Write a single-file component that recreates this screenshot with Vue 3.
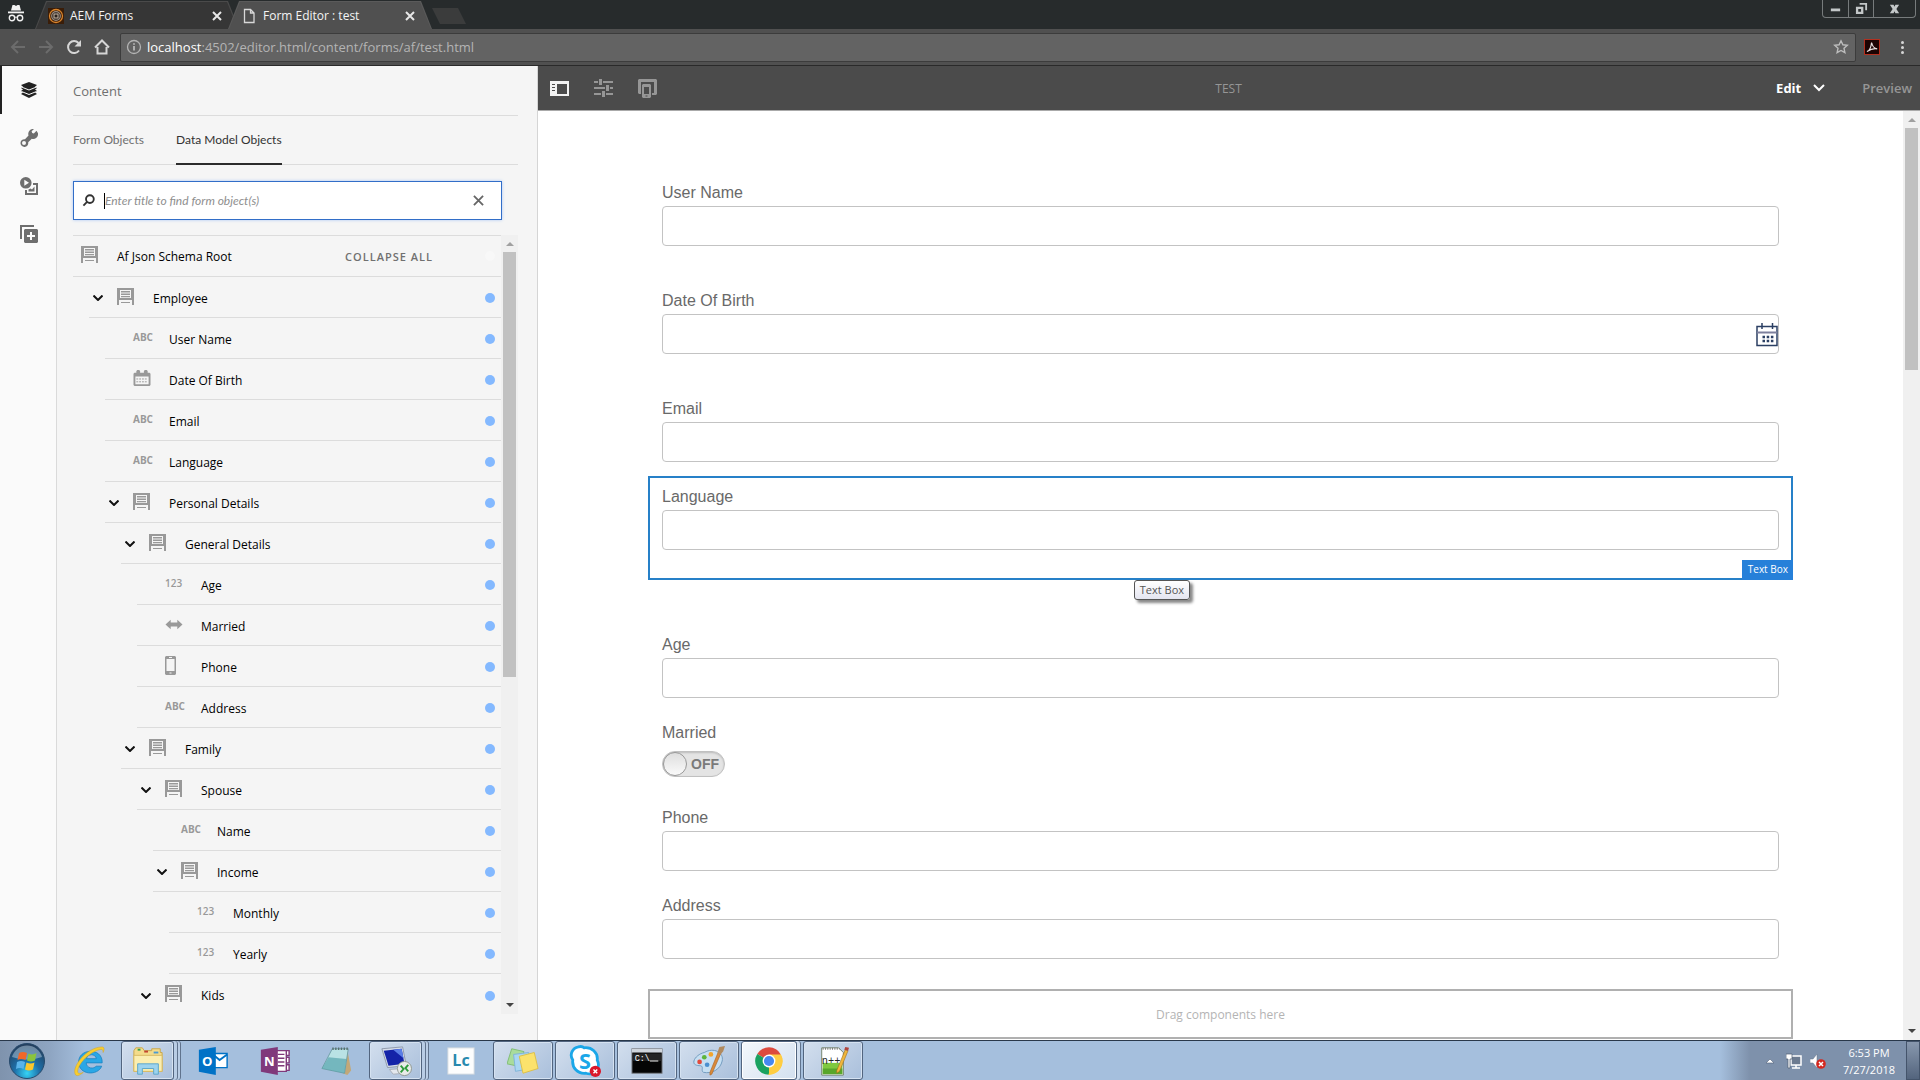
<template>
  <div class="screen">
    <!-- 浏览器标签栏 -->
    <header class="tabstrip">
      <svg class="incognito" viewBox="0 0 18 20" aria-hidden="true">
        <path d="M5.5 1h2l1.500 1h0l1.500-1h2l1.500 5.500H4z" fill="#f2f2f2" />
        <rect x="1" y="7.500" width="16" height="1.800" fill="#f2f2f2" />
        <circle cx="5" cy="14" r="2.700" fill="none" stroke="#f2f2f2" stroke-width="1.400" />
        <circle cx="13" cy="14" r="2.700" fill="none" stroke="#f2f2f2" stroke-width="1.400" />
        <path d="M7.500 13.500q1.500-1 3 0" fill="none" stroke="#f2f2f2" />
      </svg>
      <div class="tab-edge">
        <div class="tab">
          <svg class="tab-icon" viewBox="0 0 16 16" aria-hidden="true">
            <rect width="16" height="16" fill="#3a1d08" />
            <circle cx="8" cy="8" r="6.500" fill="none" stroke="#d9842c" stroke-width="1.300" />
            <circle cx="8" cy="8" r="4.300" fill="#2a211b" stroke="#9a8f86" stroke-width="1.200" />
            <rect x="6" y="6" width="4" height="4" fill="none" stroke="#c9b9a8" />
          </svg>
          <span class="tab-title">AEM Forms</span>
          <button class="tab-close" aria-label="Close tab"><svg viewBox="0 0 10 10"><path d="M1 1l8 8M9 1l-8 8" /></svg></button>
        </div>
      </div>
      <div class="tab-edge active">
        <div class="tab">
          <svg class="tab-icon" viewBox="0 0 16 16" aria-hidden="true">
            <path d="M3.500 1.500h6l3.500 3.500v9.500h-9.500zM9.500 1.500v3.500h3.500" fill="none" stroke="#d8d8d8" stroke-width="1.300" />
          </svg>
          <span class="tab-title">Form Editor : test</span>
          <button class="tab-close" aria-label="Close tab"><svg viewBox="0 0 10 10"><path d="M1 1l8 8M9 1l-8 8" /></svg></button>
        </div>
      </div>
      <button class="new-tab" aria-label="New tab"></button>
      <div class="window-controls">
        <button aria-label="Minimize">
          <svg viewBox="0 0 14 14"><rect x="2" y="7" width="10" height="3" /></svg>
        </button>
        <button aria-label="Restore">
          <svg viewBox="0 0 14 14"><path d="M5 1h8v8h-2v-6h-6zM1 5h8v8H1zM3.500 7.500v3h3v-3z" fill-rule="evenodd" /></svg>
        </button>
        <button class="wide" aria-label="Close">
          <svg viewBox="0 0 14 14"><path d="M2 3h4l1 2 1-2h4l-3 4.500 3 4.500h-4l-1-2-1 2H2l3-4.500z" /></svg>
        </button>
      </div>
    </header>

    <!-- 地址栏 -->
    <div class="toolbar">
      <button class="nav dim" aria-label="Back"><svg viewBox="0 0 16 16"><path d="M15 8H2M8 2L2 8l6 6" /></svg></button>
      <button class="nav dim" aria-label="Forward"><svg viewBox="0 0 16 16"><path d="M1 8h13M8 2l6 6-6 6" /></svg></button>
      <button class="nav" aria-label="Reload"><svg viewBox="0 0 16 16"><path d="M13 11.500A6 6 0 1 1 12.500 4" /><path class="solid" d="M15 1v6.500H8.500z" /></svg></button>
      <button class="nav" aria-label="Home"><svg viewBox="0 0 16 16"><path d="M1 8.500L8 1.500l7 7M3.500 8v6.500h9V8" /></svg></button>
      <div class="address">
        <svg class="info" viewBox="0 0 16 16" aria-hidden="true">
          <circle cx="8" cy="8" r="6.500" fill="none" stroke="#b4b4b4" stroke-width="1.300" />
          <path d="M8 7v4.500M8 4.200v1.600" stroke="#c4c4c4" stroke-width="1.600" />
        </svg>
        <span class="url"><b>localhost</b>:4502/editor.html/content/forms/af/test.html</span>
        <svg class="star" viewBox="0 0 16 16" aria-hidden="true">
          <path d="M8 1.800l1.900 4 4.400.500-3.300 3 .900 4.400L8 11.500l-3.900 2.200.900-4.400-3.300-3 4.400-.500z" fill="none" stroke="#bdbdbd" stroke-width="1.400" />
        </svg>
      </div>
      <svg class="acrobat" viewBox="0 0 16 16" aria-hidden="true">
        <rect x=".5" y=".5" width="15" height="15" fill="#1c0303" stroke="#b3301f" />
        <path d="M3 12.500c2-.500 4-4 4.600-9 .800 4 3 6 5.600 6.300-3.500-.600-6.500.200-10.200 2.700z" fill="none" stroke="#e8e0e0" stroke-width="1.200" />
      </svg>
      <button class="more" aria-label="Menu"><i></i><i></i><i></i></button>
    </div>

    <main class="editor">
      <!-- 左侧图标栏 -->
      <nav class="rail">
        <button class="current" aria-label="Content">
          <svg viewBox="0 0 18 18"><path d="M9 1l8 3-2 1.700 2 1.300-2 1.500 2 1.500-2 1.500 2 1.500-8 4-8-4 2-1.500L1 10l2-1.500L1 7l2-1.300L1 4z" /><path class="gap" d="M1.500 6L9 9 16.500 6M1.500 10.500L9 13.500 16.500 10.500" /></svg>
        </button>
        <button aria-label="Properties">
          <svg viewBox="0 0 18 18"><path d="M16.500 1.800L13.800 4.500l-1.600-.600-.600-1.600L14 0a5 5 0 0 0-5.500 6.500L5 10.200a3.900 3.900 0 1 0 3.200 3.100l3.600-3.500A5 5 0 0 0 18 4.200zM4 12a2 2 0 1 1 0 4 2 2 0 0 1 0-4z" fill-rule="evenodd" /></svg>
        </button>
        <button aria-label="Assets">
          <svg viewBox="0 0 18 18"><path d="M5.800 0a5.800 5.800 0 1 1 0 11.600A5.800 5.800 0 0 1 5.800 0zM4.300 2.800v6l4.700-3z" fill-rule="evenodd" /><path d="M13 6h5v12H5v-5h2v3h9V8h-3zM8.500 14.500v-2l2-1 1.500 1 2.500-3v5z" /></svg>
        </button>
        <button aria-label="Components">
          <svg viewBox="0 0 18 18"><path d="M0 0h14v2H2v12H0z" /><path d="M5 4h12l1 1v12l-1 1H5l-1-1V5zM10 7v3H7v2h3v3h2v-3h3v-2h-3V7z" fill-rule="evenodd" /></svg>
        </button>
      </nav>

      <!-- 侧面板 -->
      <aside class="panel">
        <h2 class="panel-title">Content</h2>
        <div class="panel-tabs">
          <button>Form Objects</button>
          <button class="on">Data Model Objects</button>
        </div>
        <div class="search">
          <svg class="search-icon" viewBox="0 0 14 14" aria-hidden="true"><circle cx="8.500" cy="5.500" r="4.200" /><path d="M5.500 8.500L1.500 12.500" /></svg>
          <span class="caret"></span>
          <input type="text" v-model="keyword" aria-label="Search form objects" placeholder="Enter title to find form object(s)">
          <button aria-label="Clear" @click="keyword = ''"><svg viewBox="0 0 12 12"><path d="M1 1l10 10M11 1L1 11" /></svg></button>
        </div>
        <div class="tree-wrap">
          <ul class="tree">
            <li v-for="(node, i) in nodes" :key="i" :class="{ root: node.level === 0 }" :style="{ marginLeft: node.level * 16 + 'px' }">
              <span v-if="node.level" class="twisty">
                <button v-if="node.type === 'group'" :aria-label="'Collapse ' + node.name"><svg viewBox="0 0 10 6"><path d="M0.500 0.500L5 5l4.500-4.500" /></svg></button>
              </span>
              <span class="type">
                <svg v-if="node.type === 'group'" class="ico" viewBox="0 0 17 17"><path d="M0 0h17v17h-2v-5H2v5H0zM3 2v8h11V2zM4 3h9v1.500H4zM4 5.500h9V7H4zM4 8h9v1.300H4zM4 14h9v1H4z" fill-rule="evenodd" /></svg>
                <svg v-else-if="node.type === 'date'" class="ico date" viewBox="0 0 18 18"><path d="M1 3h2V1l1-1h2l1 1v2h4V1l1-1h2l1 1v2h2l1 1v12l-1 1H1l-1-1V4zM2 7v8h14V7z" fill-rule="evenodd" /><path d="M3 9.500h12M3 12.500h12" stroke="#999" stroke-dasharray="2 1" /></svg>
                <svg v-else-if="node.type === 'switch'" class="ico date" viewBox="0 0 18 18"><path d="M0 9l5.500-5v3h7V4L18 9l-5.500 5v-3h-7v3z" /></svg>
                <svg v-else-if="node.type === 'phone'" class="ico phone" viewBox="0 0 11 19"><path d="M1 0h9l1 1v17l-1 1H1l-1-1V1zM1.500 3v12h8V3zM4.500 16.500v1h2v-1zM4 1v1h3V1z" fill-rule="evenodd" /></svg>
                <span v-else :class="node.type">{{ node.type === 'abc' ? 'ABC' : '123' }}</span>
              </span>
              <span class="name">{{ node.name }}</span>
              <button v-if="node.level === 0" class="collapse">COLLAPSE ALL</button>
              <i class="dot" :class="{ blank: node.level === 0 }"></i>
            </li>
          </ul>
          <div class="scroll">
            <i class="up"></i>
            <i class="thumb"></i>
            <i class="down"></i>
          </div>
        </div>
      </aside>

      <!-- 表单区域 -->
      <section class="stage">
        <div class="actionbar">
          <button aria-label="Toggle side panel">
            <svg class="bright" viewBox="0 0 19 19"><path d="M0 2h19v15H0zM7 5v10h10V5zM2 5v1h3V5zM2 8v1h3V8zM2 11v1h3v-1z" fill-rule="evenodd" /></svg>
          </button>
          <button aria-label="Page information">
            <svg viewBox="0 0 19 19"><path d="M0 2h4v2H0zM9 2h10v2H9zM5 0h3v6H5zM0 8h11v2H0zM16 8h3v2h-3zM12 6h3v6h-3zM0 14h7v2H0zM12 14h7v2h-7zM8 12h3v6H8z" /></svg>
          </button>
          <button aria-label="Emulator">
            <svg viewBox="0 0 19 19"><path d="M1 0h17l1 1v14l-1 1h-4v-2h2V3H3v12H1l-1-1V1z" /><path d="M5 5h7l1 1v12l-1 1H5l-1-1V6zM6 8v7h5V8zM7.500 16.500v1h2v-1z" fill-rule="evenodd" /></svg>
          </button>
          <h1>TEST</h1>
          <button class="mode">Edit <svg viewBox="0 0 12 8"><path d="M1 1l5 5 5-5" /></svg></button>
          <button class="preview">Preview</button>
        </div>
        <div class="canvas">
          <form class="form" @submit.prevent>
            <div v-for="f in fields" :key="f.id" class="field" :class="f.space">
              <label :for="f.id">{{ f.label }}</label>
              <label v-if="f.toggle" class="toggle">
                <input type="checkbox" :id="f.id">
                <span class="knob"></span>
                <span>OFF</span>
              </label>
              <input v-else type="text" :id="f.id">
              <svg v-if="f.date" class="picker" viewBox="0 0 22 24" aria-hidden="true">
                <path d="M1 3.500h20v19H1z" fill="#fff" stroke="#2b3f63" stroke-width="1.500" />
                <path d="M1 9.500h20" stroke="#7c7f9c" stroke-width="2" />
                <path d="M6 0v6M16.500 0v6" stroke="#2b3f63" stroke-width="1.500" />
                <path d="M6.500 14h11M6.500 18h11" stroke="#2b3f63" stroke-width="2.500" stroke-dasharray="2.500 1.700" />
              </svg>
              <div v-if="f.selected" class="selection">
                <span class="badge">Text Box</span>
                <span class="tip">Text Box</span>
              </div>
            </div>
            <div class="dropzone">Drag components here</div>
          </form>
          <div class="scroll page">
            <i class="up"></i>
            <i class="thumb"></i>
            <i class="down"></i>
          </div>
        </div>
      </section>
    </main>

    <!-- 任务栏 -->
    <footer class="taskbar">
      <button class="start" aria-label="Start">
        <svg viewBox="0 0 38 38">
          <defs>
            <radialGradient id="orb" cx=".5" cy=".85" r=".8"><stop offset="0" stop-color="#35d3f5" /><stop offset=".45" stop-color="#1d6fa8" /><stop offset="1" stop-color="#24405f" /></radialGradient>
          </defs>
          <circle cx="19" cy="19" r="17.500" fill="url(#orb)" stroke="#274a6c" />
          <path d="M4 15a15.500 15.500 0 0 1 30 0q-15 5-30 0z" fill="#c8dcea" opacity=".45" />
          <path d="M11 11q4-2 8 0l-1.500 7q-4-2-8 0z" fill="#f0682a" />
          <path d="M20.500 11.500q4 2 8-.500l-1.500 7.500q-4 2-8 0z" fill="#8ac43c" />
          <path d="M9 20q4-2 8 0l-1.500 7q-4-2-7.500 0z" fill="#5ab4ea" />
          <path d="M18.500 20.500q4 2 8 0L25 27.500q-4 2-8 0z" fill="#fbc72c" />
        </svg>
      </button>
      <button v-for="app in apps" :key="app.id" class="app" :class="{ open: app.open, stack: app.stack, front: app.front }" :aria-label="app.label">
        <svg v-if="app.id === 'ie'" viewBox="0 0 34 34">
          <path d="M31 19H14c.500 6.500 8.500 6.500 10.500 3.500H30.500c-4 10.500-24.500 10-24.500-4.500 0-15 26-15.500 25 1zM14.300 14.500h10.500c-.800-5.500-9.500-5.500-10.500 0z" fill="#2aa7e6" stroke="#1a80bf" stroke-width=".8" />
          <path d="M3 32C-3 25 14 2 31 2c3 0 2 4 1 6 0-3-1-4-4-3C16 8 4 22 5 29c1 2 4 1 6 0-3 2.500-6 4.500-8 3z" fill="#f7cd2f" stroke="#d8a318" stroke-width=".5" />
        </svg>
        <svg v-else-if="app.id === 'explorer'" viewBox="0 0 34 34">
          <path d="M2 6l2-3h7l2 3h8V4h9v4h2v20H2z" fill="#f4dc8b" stroke="#c9a549" />
          <path d="M2 11h30v17H2z" fill="#fbeeb0" stroke="#d8ba63" />
          <path d="M6 4h3v2H6z" fill="#37a24a" /><path d="M13 6h4v2h-4z" fill="#c3442f" /><path d="M23 7h5v2h-5z" fill="#4b9bd3" />
          <path d="M6 31V20h22v11h-5v-6H11v6z" fill="#9cd3ee" stroke="#5aa4c9" />
        </svg>
        <svg v-else-if="app.id === 'outlook'" viewBox="0 0 34 34">
          <path d="M17 9h15v15H17z" fill="#fff" stroke="#0072c6" stroke-width="1.500" /><path d="M17 10l7 6 8-6" fill="none" stroke="#0072c6" stroke-width="2" />
          <path d="M2 5l18-3v30L2 28.500z" fill="#0072c6" /><text x="11" y="22.500" class="glyph">O</text>
        </svg>
        <svg v-else-if="app.id === 'onenote'" viewBox="0 0 34 34">
          <path d="M17 6h12v22H17zM29 6h3v5h-3zM29 13h3v6h-3zM29 21h3v6h-3z" fill="#fff" stroke="#80397b" stroke-width="1.500" /><path d="M20 10h7M20 14h7M20 18h7M20 22h7" stroke="#80397b" stroke-width="1.500" />
          <path d="M2 5l18-3v30L2 28.500z" fill="#80397b" /><text x="11" y="22.500" class="glyph">N</text>
        </svg>
        <svg v-else-if="app.id === 'notepad'" viewBox="0 0 34 34">
          <path d="M28 5l4 22-4 5-5-2z" fill="#c2a878" /><path d="M12 4h17l-4 26-24-5z" fill="#b9e2e5" stroke="#6e9ea5" /><path d="M8 13l19 2-2 15-24-5z" fill="#57a5ae" opacity=".7" /><path d="M12 4h17" stroke="#5a6e70" stroke-width="2.500" stroke-dasharray="1.500 1.500" />
        </svg>
        <svg v-else-if="app.id === 'rdp'" viewBox="0 0 34 34">
          <path d="M10 26l13-1 3 5-12 1z" fill="#e4e8ee" stroke="#a6adb8" /><path d="M2 4l22-2 4 20-20 2z" fill="#d6dde8" stroke="#8e99aa" /><path d="M4 6l19-2 3 16-17 2z" fill="#1423a8" /><path d="M14 5l9-1 2 10z" fill="#5a7ee6" />
          <circle cx="26" cy="25" r="7.500" fill="#e8ebe8" stroke="#8e9690" /><path d="M22 22l3 3.500L22 29M30 21l-3 3.500 3 3.500" fill="none" stroke="#2d9b3a" stroke-width="2" />
        </svg>
        <svg v-else-if="app.id === 'lc'" viewBox="0 0 34 34">
          <rect x="3" y="3" width="28" height="28" fill="#fdfdfd" stroke="#c9d3dc" /><text x="17" y="22" class="glyph lc">Lc</text>
        </svg>
        <svg v-else-if="app.id === 'notes'" viewBox="0 0 34 34">
          <path d="M5 4l13 3-4 16-14-3z" fill="#a9dc9b" stroke="#7fbd73" /><path d="M7 10l16-2 2 17-16 3z" fill="#a9d6f2" stroke="#7fb3d8" /><path d="M13 12l16-4 4 17-16 5z" fill="#fbe26c" stroke="#dcbf48" />
        </svg>
        <svg v-else-if="app.id === 'skype'" viewBox="0 0 34 34">
          <path d="M10 2c3-1 5 0 6 1 8-1 15 5 14 13 4 8-3 17-12 14C9 31 3 24 4 16 0 10 4 3 10 2z" fill="#fff" stroke="#1ba7e8" stroke-width="3" /><text x="17" y="25" class="glyph skype">S</text>
          <circle cx="28" cy="28" r="6" fill="#d9182b" /><path d="M26 26l4 4M30 26l-4 4" stroke="#fff" stroke-width="1.500" />
        </svg>
        <svg v-else-if="app.id === 'cmd'" viewBox="0 0 34 34">
          <rect x="1" y="4" width="32" height="26" fill="#050505" stroke="#7a7f86" /><rect x="1" y="4" width="32" height="4" fill="#cfd5dc" /><path d="M2 17h30V9H2z" fill="#444" opacity=".5" /><text x="12" y="17" class="glyph cmd">C:\</text><path d="M20 17h9" stroke="#fff" />
        </svg>
        <svg v-else-if="app.id === 'paint'" viewBox="0 0 34 34">
          <path d="M12 8c10-6 21 0 19 9-2 9-11 14-20 12-3-2 1-6-3-7-4 0-8-1-7-5 1-4 6-8 11-9z" fill="#c6dff2" stroke="#6f99bd" />
          <circle cx="7" cy="18" r="2.500" fill="#e24a3b" /><circle cx="12" cy="13" r="2.500" fill="#5cb53b" /><circle cx="19" cy="10" r="2.500" fill="#f3a52c" /><circle cx="15" cy="21" r="2.500" fill="#4a90cf" />
          <path d="M30 8l-10 23-2 1 0-3L27 7z" fill="#d98a3b" stroke="#a8611f" stroke-width=".6" /><path d="M26 8l2-6 6-1-2 6-3 3z" fill="#b18a5e" />
        </svg>
        <svg v-else-if="app.id === 'chrome'" viewBox="0 0 34 34">
          <path d="M17 17L4.500 9.500A14.500 14.500 0 0 1 29.600 10z" fill="#dd4b3e" /><path d="M17 17L29.600 10A14.500 14.500 0 0 1 17 31.500z" fill="#ffcd42" /><path d="M17 17v14.500A14.500 14.500 0 0 1 4.500 9.500z" fill="#1aa260" />
          <path d="M17 10h12.500A14.500 14.500 0 0 1 16 31.500L23 20z" fill="#ffcd42" />
          <circle cx="17" cy="17" r="6.800" fill="#fff" /><circle cx="17" cy="17" r="5.400" fill="#4688f1" />
        </svg>
        <svg v-else viewBox="0 0 34 34">
          <path d="M5 3h18l5 5v24H5z" fill="#fff" stroke="#70806a" /><path d="M6 19h21v12H6z" fill="#7fc93f" /><path d="M6 25h21v6H6z" fill="#3d8f1e" opacity=".6" /><path d="M6 4h18" stroke="#777" stroke-width="2" stroke-dasharray="1 1.500" />
          <text x="15" y="20" class="glyph npp">n++</text><path d="M21 27l9-22 3 1-9 22-3 2z" fill="#f0b63c" stroke="#9b6b1b" stroke-width=".6" /><path d="M29 5l1-3 4 1-1 3z" fill="#b0443c" />
        </svg>
      </button>
      <div class="tray">
        <svg class="hidden-icons" viewBox="0 0 10 6" aria-hidden="true"><path d="M1 5l4-4 4 4z" fill="#fff" stroke="#52617a" stroke-width=".6" /></svg>
        <svg class="tray-icon" viewBox="0 0 16 16" aria-hidden="true"><path d="M5 3h10v9H5z" fill="#6c7b90" stroke="#fff" stroke-width="1.500" /><path d="M6 15h8M10 12v3" stroke="#fff" stroke-width="1.500" /><path d="M0 1h6v5H4v9H2V6H0z" fill="#fff" stroke="#4d5b70" stroke-width=".7" /></svg>
        <svg class="tray-icon" viewBox="0 0 16 16" aria-hidden="true"><path d="M0 6h3l4-5v14l-4-5H0z" fill="#fff" stroke="#66748a" stroke-width=".5" /><circle cx="11" cy="11" r="4.800" fill="#d4281f" /><path d="M9 9l4 4M13 9l-4 4" stroke="#fff" stroke-width="1.500" /></svg>
        <div class="clock">
          <time>6:53 PM</time>
          <time>7/27/2018</time>
        </div>
      </div>
      <button class="show-desktop" aria-label="Show desktop"></button>
    </footer>
  </div>
</template>

<script setup>
import { ref } from 'vue';

const keyword = ref('');

const nodes = [
  { name: 'Af Json Schema Root', level: 0, type: 'group' },
  { name: 'Employee', level: 1, type: 'group' },
  { name: 'User Name', level: 2, type: 'abc' },
  { name: 'Date Of Birth', level: 2, type: 'date' },
  { name: 'Email', level: 2, type: 'abc' },
  { name: 'Language', level: 2, type: 'abc' },
  { name: 'Personal Details', level: 2, type: 'group' },
  { name: 'General Details', level: 3, type: 'group' },
  { name: 'Age', level: 4, type: 'num' },
  { name: 'Married', level: 4, type: 'switch' },
  { name: 'Phone', level: 4, type: 'phone' },
  { name: 'Address', level: 4, type: 'abc' },
  { name: 'Family', level: 3, type: 'group' },
  { name: 'Spouse', level: 4, type: 'group' },
  { name: 'Name', level: 5, type: 'abc' },
  { name: 'Income', level: 5, type: 'group' },
  { name: 'Monthly', level: 6, type: 'num' },
  { name: 'Yearly', level: 6, type: 'num' },
  { name: 'Kids', level: 4, type: 'group' }
];

const fields = [
  { id: 'username', label: 'User Name', space: 'loose' },
  { id: 'dob', label: 'Date Of Birth', space: 'loose', date: true },
  { id: 'email', label: 'Email' },
  { id: 'language', label: 'Language', space: 'group-end', selected: true },
  { id: 'age', label: 'Age' },
  { id: 'married', label: 'Married', toggle: true },
  { id: 'phone', label: 'Phone' },
  { id: 'address', label: 'Address' }
];

const apps = [
  { id: 'ie', label: 'Internet Explorer' },
  { id: 'explorer', label: 'Explorer', open: true, stack: true },
  { id: 'outlook', label: 'Outlook' },
  { id: 'onenote', label: 'OneNote' },
  { id: 'notepad', label: 'Notepad' },
  { id: 'rdp', label: 'Remote Desktop', open: true, stack: true },
  { id: 'lc', label: 'LiveCycle' },
  { id: 'notes', label: 'Sticky Notes', open: true },
  { id: 'skype', label: 'Skype', open: true },
  { id: 'cmd', label: 'Command Prompt', open: true },
  { id: 'paint', label: 'Paint', open: true },
  { id: 'chrome', label: 'Chrome', open: true, stack: true, front: true },
  { id: 'npp', label: 'Notepad++', open: true }
];
</script>

<style>
body {
  margin: 0;
}
</style>

<style scoped>
* {
  box-sizing: border-box;
}

.screen {
  height: 100vh;
  display: flex;
  flex-direction: column;
  overflow: hidden;
  font-family: "Open Sans", "Noto Sans", sans-serif;
  background: #fff;
}

button {
  padding: 0;
  border: none;
  background: none;
  font: inherit;
  color: inherit;
  cursor: pointer;
}

svg {
  display: block;
}

/* 标签栏 */
.tabstrip {
  flex: none;
  display: flex;
  height: 29px;
  padding-left: 7px;
  background: #272b2c;
}

.incognito {
  width: 18px;
  height: 20px;
  margin: 4px 10px 0 0;
}

.tab-edge {
  width: 204px;
  padding: 1px 1px 0;
  margin-top: 1px;
  background: #4a4a4a;
  clip-path: polygon(0 100%, 11px 0, calc(100% - 11px) 0, 100% 100%);
}

.tab {
  display: flex;
  align-items: center;
  height: 100%;
  padding: 0 16px 0 12px;
  background: #363636;
  clip-path: polygon(0 100%, 11px 0, calc(100% - 11px) 0, 100% 100%);
  color: #f4f4f4;
  font-size: 12px;
}

.tab-edge.active {
  position: relative;
  margin-left: -11px;
  background: #5a5a5a;
}

.active .tab {
  background: #505050;
}

.tab-icon {
  width: 16px;
  height: 16px;
}

.tab-title {
  flex: 1;
  padding-left: 6px;
}

.tab-close svg {
  width: 10px;
  height: 10px;
  stroke: #e8e8e8;
  stroke-width: 2;
}

.new-tab {
  width: 34px;
  height: 16px;
  margin-top: 8px;
  background: #3b3c3c;
  clip-path: polygon(0 0, 26px 0, 100% 100%, 8px 100%);
}

.window-controls {
  display: flex;
  height: 18px;
  margin: 0 4px 0 auto;
  border: 1px solid #777b7c;
  border-top: none;
  border-radius: 0 0 4px 4px;
}

.window-controls button {
  display: grid;
  place-items: center;
  width: 25px;
}

.window-controls button + button {
  border-left: 1px solid #777b7c;
}

.window-controls .wide {
  width: 42px;
}

.window-controls svg {
  width: 13px;
  height: 13px;
  fill: #c3c7c8;
}

/* 地址栏 */
.toolbar {
  flex: none;
  display: flex;
  align-items: center;
  height: 37px;
  padding: 0 16px 0 10px;
  background: #505050;
  border-bottom: 1px solid #2a2a2a;
}

.nav {
  margin-right: 12px;
}

.nav:nth-child(4) {
  margin-right: 10px;
}

.nav svg {
  width: 16px;
  height: 16px;
  fill: none;
  stroke: #d6d6d6;
  stroke-width: 2;
}

.nav .solid {
  fill: #d6d6d6;
  stroke: none;
}

.nav.dim svg {
  stroke: #6c6c6c;
}

.address {
  flex: 1;
  display: flex;
  align-items: center;
  height: 29px;
  padding: 0 6px 0 5px;
  margin-right: 8px;
  background: #636363;
  border: 1px solid #3c3c3c;
  border-radius: 2px;
}

.info,
.star,
.acrobat {
  width: 16px;
  height: 16px;
}

.url {
  flex: 1;
  padding-left: 5px;
  font-size: 13px;
  color: #b4b4b4;
}

.url b {
  font-weight: 400;
  color: #fff;
}

.more {
  display: grid;
  gap: 2px;
  margin-left: 21px;
}

.more i {
  width: 3px;
  height: 3px;
  border-radius: 50%;
  background: #d6d6d6;
}

/* 编辑器主体 */
.editor {
  flex: 1;
  min-height: 0;
  display: flex;
}

.rail {
  flex: none;
  display: flex;
  flex-direction: column;
  width: 57px;
  background: #fafafa;
  border-right: 1px solid #dadada;
}

.rail button {
  display: grid;
  place-items: center;
  height: 48px;
  border-left: 2px solid transparent;
}

.rail .current {
  border-color: #222;
}

.rail svg {
  width: 18px;
  height: 18px;
  fill: #6e6e6e;
}

.rail .current svg {
  fill: #222;
}

.rail .current .gap {
  fill: none;
  stroke: #fafafa;
  stroke-width: 1;
}

.panel {
  flex: none;
  display: flex;
  flex-direction: column;
  width: 481px;
  padding: 0 19px 26px 16px;
  background: #f5f5f5;
  border-right: 1px solid #d5d5d5;
}

.panel-title {
  flex: none;
  height: 50px;
  margin: 0;
  border-bottom: 1px solid #dcdcdc;
  font-size: 13px;
  font-weight: 400;
  line-height: 50px;
  color: #707070;
}

.panel-tabs {
  flex: none;
  display: flex;
  gap: 32px;
  height: 49px;
  border-bottom: 1px solid #dcdcdc;
  font-family: Lato, "Open Sans", sans-serif;
  font-size: 12px;
  color: #707070;
}

.panel-tabs button {
  height: 49px;
  border-bottom: 2px solid transparent;
}

.panel-tabs .on {
  border-color: #2c2c2c;
  color: #323232;
}

.search {
  flex: none;
  display: flex;
  align-items: center;
  height: 39px;
  margin: 16px 16px 15px 0;
  padding: 0 17px 0 8px;
  background: #fff;
  border: 1px solid #326ec8;
  box-shadow: 0 0 3px #a9c6f5;
}

.search svg {
  width: 13px;
  height: 13px;
  fill: none;
  stroke: #323232;
  stroke-width: 2;
}

.caret {
  width: 1px;
  height: 16px;
  margin-left: 9px;
  background: #000;
}

.search input {
  flex: 1;
  padding: 0;
  border: none;
  outline: none;
  font: italic 12px Lato, "Open Sans", sans-serif;
}

.search input::placeholder {
  color: #8e8e8e;
}

.search button svg {
  width: 11px;
  height: 11px;
  stroke: #666;
}

.tree-wrap {
  flex: 1;
  min-height: 0;
  display: flex;
}

.tree {
  flex: 1;
  margin: 0;
  padding: 0;
  list-style: none;
  border-top: 1px solid #dcdcdc;
  overflow: hidden;
}

.tree li {
  display: flex;
  align-items: center;
  height: 41px;
  padding: 2px 6px 0 4px;
  border-bottom: 1px solid #dcdcdc;
  font-size: 12px;
  color: #000;
}

.tree li:last-child {
  border-bottom: none;
}

.tree .root {
  padding: 0 6px 0 8px;
}

.twisty {
  display: flex;
  width: 24px;
}

.twisty svg {
  width: 10px;
  height: 6px;
  fill: none;
  stroke: #111;
  stroke-width: 2;
}

.type {
  width: 36px;
  padding-bottom: 4px;
  font-size: 10px;
  font-weight: 700;
  color: #999;
}

.num {
  font-weight: 600;
}

.ico {
  width: 17px;
  height: 17px;
  fill: #999;
}

.ico.date {
  width: 18px;
}

.ico.phone {
  width: 11px;
  height: 19px;
}

.name {
  flex: 1;
}

.collapse {
  margin-right: 52px;
  font-size: 11px;
  font-weight: 600;
  letter-spacing: 1px;
  color: #707070;
}

.dot {
  width: 10px;
  height: 10px;
  border-radius: 50%;
  background: #84b9ff;
}

.dot.blank {
  background: #f8f8f8;
}

/* 滚动条 */
.scroll {
  flex: none;
  display: flex;
  flex-direction: column;
  align-items: center;
  width: 17px;
  background: #f0f0f0;
}

.scroll .up,
.scroll .down {
  border: 4px solid transparent;
}

.scroll .up {
  margin: 3px 0 6px;
  border-bottom-color: #a0a0a0;
}

.scroll .down {
  margin: auto 0 3px;
  border-top-color: #444;
}

.scroll .thumb {
  width: 13px;
  height: 54.5%;
  background: #c1c1c1;
}

.scroll.page .thumb {
  height: 26%;
}

/* 操作栏 */
.stage {
  flex: 1;
  min-width: 0;
  display: flex;
  flex-direction: column;
}

.actionbar {
  flex: none;
  display: flex;
  align-items: center;
  gap: 25px;
  height: 45px;
  padding: 0 8px 0 12px;
  background: #4b4b4b;
  border-bottom: 1px solid #aaa;
  color: #969696;
}

.actionbar svg {
  width: 19px;
  height: 19px;
  fill: #969696;
}

.actionbar .bright {
  fill: #f2f2f2;
}

.actionbar h1 {
  flex: 1;
  margin: 0;
  padding-left: 24px;
  font-size: 12px;
  font-weight: 400;
  text-align: center;
}

.actionbar .mode {
  display: flex;
  align-items: center;
  gap: 12px;
  margin-right: 12px;
  font-size: 13px;
  font-weight: 700;
  color: #fff;
}

.actionbar .mode svg {
  width: 12px;
  height: 8px;
  fill: none;
  stroke: #fff;
  stroke-width: 2;
}

.preview {
  font-size: 13px;
  font-weight: 600;
}

/* 画布 */
.canvas {
  flex: 1;
  min-height: 0;
  display: flex;
}

.form {
  flex: 1;
  margin: 0 110px;
  padding-top: 67px;
  font-family: "Liberation Sans", Arial, sans-serif;
  font-size: 16px;
  color: #696969;
}

.field {
  position: relative;
  display: flex;
  flex-direction: column;
  margin: 0 14px 20px;
}

.field.loose {
  margin-bottom: 40px;
}

.field.group-end {
  margin-bottom: 80px;
}

.field > label {
  padding-top: 2px;
  line-height: 26px;
}

.field > input {
  height: 40px;
  padding: 0 10px;
  border: 1px solid #c3c3c3;
  border-radius: 4px;
  font: inherit;
}

.picker {
  position: absolute;
  right: 1px;
  bottom: 7px;
  width: 22px;
  height: 24px;
}

.selection {
  position: absolute;
  inset: -6px -14px -30px;
  border: 2px solid #2680c8;
  pointer-events: none;
}

.badge {
  position: absolute;
  right: -2px;
  bottom: -2px;
  padding: 0 5px 2px 6px;
  background: #2680d9;
  font: 10px/18px "Open Sans", sans-serif;
  color: #fff;
}

.tip {
  position: absolute;
  top: 102px;
  left: 42.4%;
  padding: 0 5px;
  border: 1px solid #555;
  border-radius: 3px;
  background: linear-gradient(#fff, #e4e5f0);
  box-shadow: 3px 3px 3px #888;
  font: 11px/18px "Open Sans", sans-serif;
  color: #555;
}

.field > .toggle {
  display: flex;
  align-items: center;
  gap: 4px;
  width: 63px;
  height: 26px;
  margin: 5px 0 6px;
  padding: 0;
  border: 1px solid #c0c0c0;
  border-radius: 13px;
  background: #e4e4e4;
  box-shadow: inset 0 1px 2px #bbb;
  font-size: 14px;
  font-weight: 700;
  color: #7a7a7a;
}

.toggle input {
  position: absolute;
  opacity: 0;
}

.knob {
  width: 24px;
  height: 24px;
  border: 1px solid #999;
  border-radius: 50%;
  background: linear-gradient(#dedede, #fafafa);
}

.dropzone {
  height: 50px;
  margin-top: 30px;
  border: 2px solid #b0b0b0;
  font: 12px/48px "Open Sans", sans-serif;
  text-align: center;
  color: #b4b4b4;
}

/* 任务栏 */
.taskbar {
  flex: none;
  display: flex;
  gap: 2px;
  height: 40px;
  border-top: 1px solid #29384a;
  background: linear-gradient(to right, #7f93ad, #8ea5c2 50px, #a5bfdd 85px, #a5bfdd calc(100% - 200px), #7e91ab calc(100% - 170px));
}

.start {
  width: 57px;
  padding-left: 8px;
}

.start svg {
  width: 38px;
  height: 38px;
}

.app {
  display: grid;
  place-items: center;
  width: 60px;
  padding-top: 1px;
  border: 1px solid transparent;
  border-radius: 3px;
}

.app svg {
  width: 32px;
  height: 32px;
}

.app.open {
  border-color: #52657f;
  background: linear-gradient(135deg, #d3dfee, #a9bfdb);
  box-shadow: inset 0 0 0 1px #d5e2f1;
}

.app.front {
  background: linear-gradient(135deg, #f4f8fc, #d3e0ef);
}

.app.stack {
  width: 53px;
  margin-right: 7px;
  box-shadow: inset 0 0 0 1px #d5e2f1, 3px 0 0 #b9cde5, 4px 0 0 #60738d, 6px 0 0 #b9cde5, 7px 0 0 #60738d;
}

.app.front.stack {
  width: 56px;
  margin-right: 4px;
  box-shadow: inset 0 0 0 1px #fff, 3px 0 0 #d3e0ef, 4px 0 0 #60738d;
}

.glyph {
  font: 700 14px "Open Sans", sans-serif;
  text-anchor: middle;
  fill: #fff;
}

.glyph.lc {
  font-size: 17px;
  fill: #2889ae;
}

.glyph.skype {
  font-size: 23px;
  fill: #1ba7e8;
}

.glyph.cmd {
  font: 9px "Liberation Mono", monospace;
}

.glyph.npp {
  font: 11px "Liberation Mono", monospace;
  fill: #222;
}

.tray {
  display: flex;
  align-items: center;
  gap: 8px;
  margin-left: auto;
}

.hidden-icons {
  width: 10px;
  height: 6px;
  margin-right: 3px;
}

.tray-icon {
  width: 16px;
  height: 16px;
}

.clock {
  display: grid;
  width: 70px;
  font-size: 11px;
  line-height: 17px;
  text-align: center;
  color: #fff;
}

.show-desktop {
  width: 14px;
  height: 100%;
  border: 1px solid #44546b;
  background: linear-gradient(#8898ae, #53647d);
}
</style>
